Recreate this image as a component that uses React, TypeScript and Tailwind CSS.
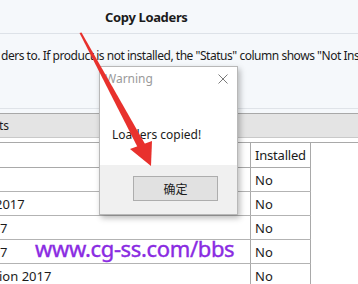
import React from "react";

const rows: { name: string; shift: number }[] = [
  { name: "", shift: 0 },
  { name: "2017", shift: -5 },
  { name: "7", shift: 0 },
  { name: "7", shift: 0 },
  { name: "ion 2017", shift: -1 },
];

export default function App() {
  return (
    <div className="relative w-[358px] h-[284px] overflow-hidden bg-[#f5f8fb] text-[#1b1b1b] font-['Noto_Sans',sans-serif]">
      {/* header */}
      <div className="h-[34px] border-b border-[#dde2e8] flex items-center pl-[105px]">
        <span className="text-[13px] font-bold leading-[16px] whitespace-nowrap tracking-[-0.35px]">Copy Loaders</span>
      </div>
      {/* info text */}
      <div className="h-[74px] pt-[14px] overflow-hidden">
        <div className="text-[12px] leading-[16px] whitespace-nowrap pl-[1px] tracking-[-0.47px]">
          ders to. If product is not installed, the "Status" column shows "Not Installed".
        </div>
      </div>
      <div className="h-px bg-[#dfe3e8]" />
      <div className="h-[4px]" />
      {/* section bar */}
      <div className="h-[24px] border-t border-[#a8a8a8] bg-[#e4e4e4] flex items-center">
        <span className="text-[12px] leading-[16px] -ml-[1px]">ts</span>
      </div>
      <div className="h-px bg-[#c9c9c9]" />
      <div className="h-[4px] bg-white" />
      {/* table */}
      <div className="bg-white">
        <div className="h-px bg-[#a9a9a9]" />
        <div className="flex h-[25px] w-[311px] border-b border-[#a9a9a9]">
          <div className="w-[251px] border-r border-[#a9a9a9]" />
          <div className="w-[60px] border-r border-[#a9a9a9] flex items-center pl-[4px] text-[13px] leading-[16px] tracking-[-0.2px]">
            Installed
          </div>
        </div>
        {rows.map((r, i) => (
          <div key={i} className="flex h-[24px] w-[311px] border-b border-[#b3b3b3]">
            <div className="w-[251px] border-r border-[#a9a9a9] flex items-center overflow-hidden text-[13px] leading-[16px] whitespace-nowrap">
              <span style={{ marginLeft: r.shift }}>{r.name}</span>
            </div>
            <div className="w-[60px] border-r border-[#a9a9a9] flex items-center pl-[4px] text-[13px] leading-[16px]">
              No
            </div>
          </div>
        ))}
      </div>

      {/* dialog */}
      <div className="absolute left-[99px] top-[66px] w-[139px] h-[149px] border border-[#b8b8b8] bg-white flex flex-col shadow-[2px_3px_6px_rgba(0,0,0,0.28)]">
        <div className="h-[23px] flex items-center justify-between pl-[5px] pr-[9px]">
          <span className="text-[12px] leading-[16px] text-[#9a9a9a]">Warning</span>
          <svg width="10" height="10" viewBox="0 0 10 10" className="block">
            <path d="M0.5 0.5 L9.5 9.5 M9.5 0.5 L0.5 9.5" stroke="#7a7a7a" strokeWidth="1" fill="none" />
          </svg>
        </div>
        <div className="h-[75px] pt-[31px] pl-[12px]">
          <span className="text-[12px] leading-[16px] text-[#1b1b1b] whitespace-nowrap">Loaders copied!</span>
        </div>
        <div className="flex-1 bg-[#f0f0f0] pt-[11px] pl-[33px]">
          <div className="w-[85px] h-[25px] border border-[#adadad] bg-[#e1e1e1] flex items-center justify-center text-[12px] leading-[16px] font-['Noto_Sans_CJK_SC',sans-serif]">
            确定
          </div>
        </div>
      </div>

      {/* red arrow */}
      <svg className="absolute left-0 top-0 pointer-events-none" width="358" height="284" viewBox="0 0 358 284">
        <polygon points="79.5,33 81.5,32.5 145,144 138,148" fill="#e8312d" />
        <polygon points="130,149 152,141 151,166" fill="#e8312d" />
      </svg>

      {/* watermark */}
      <div className="absolute left-[35px] top-[236px] text-[22px] leading-[24px] text-[#8a2be2] whitespace-nowrap tracking-[-0.35px] font-['Noto_Sans',sans-serif] [-webkit-text-stroke:0.4px_#8a2be2]">
        www.cg-ss.com/bbs
      </div>
    </div>
  );
}
